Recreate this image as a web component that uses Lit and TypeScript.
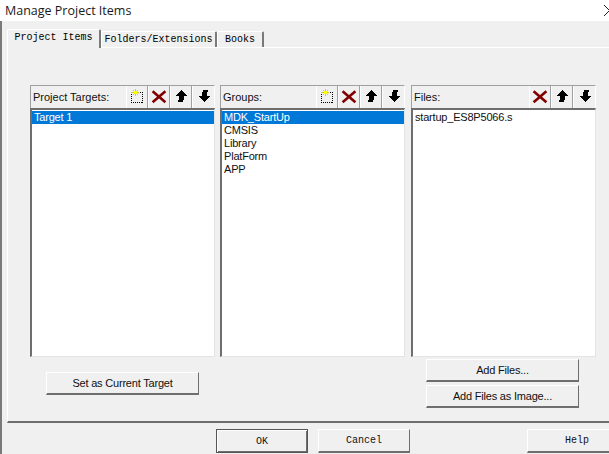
import { LitElement, html, css, svg } from "lit";
import { customElement } from "lit/decorators.js";

const newIcon = svg`<svg class="ic" width="18" height="18" viewBox="0 0 18 18" shape-rendering="crispEdges">
<rect x="3.5" y="4.5" width="11" height="10" fill="none" stroke="#000" stroke-dasharray="1 1"/>
<path d="M7 1h1v2h-1zM3 4h3v1h-3zM9 4h2v1h-2zM7 6h1v2h-1zM5 2h1v1h-1zM9 2h1v1h-1zM5 6h1v1h-1zM9 6h1v1h-1z" fill="#c8c838"/>
<path d="M6 3h3v3h-3z" fill="#ffff00"/></svg>`;
const delIcon = svg`<svg class="ic" width="18" height="18" viewBox="0 0 18 18">
<path d="M2.6 3.2L15.4 14.2M15.4 3.2L2.6 14.2" stroke="#800000" stroke-width="2.6" fill="none"/></svg>`;
const upIcon = svg`<svg class="ic" width="18" height="18" viewBox="0 0 18 18" shape-rendering="crispEdges">
<path d="M9 2h1v1h1v1h1v1h1v1h1v1h1v1h-3v4h-1v2h-5v-2h1v-4h-3v-1h1v-1h1v-1h1v-1h1v-1h1v-1h1z" fill="#000"/></svg>`;
const downIcon = svg`<svg class="ic" width="18" height="18" viewBox="0 0 18 18" shape-rendering="crispEdges">
<path d="M8 2h5v2h-1v4h3v1h-1v1h-1v1h-1v1h-1v1h-1v1h-1v-1h-1v-1h-1v-1h-1v-1h-1v-1h-1v-1h3v-4h1z" fill="#000"/></svg>`;

@customElement("app-root")
export class AppRoot extends LitElement {
  static styles = css`
    :host { display: block; width: 609px; height: 454px; overflow: hidden; }
    .win { width: 609px; height: 454px; display: flex; flex-direction: column; background: #f0f0f0; overflow: hidden; font-family: "Liberation Sans", Arial, sans-serif; color: #000; }
    .title { height: 21px; flex: none; background: #fff; display: flex; align-items: center; justify-content: space-between; padding: 0 0 0 5px; font: 12.5px "Open Sans", sans-serif; color: #1a1a1a; white-space: nowrap; }
    .close { width: 5px; height: 11px; overflow: hidden; display: block; }
    .body { flex: 1; min-height: 0; border-left: 2px solid #7a7a7a; display: flex; flex-direction: column; padding-left: 5px; }
    .tabs { display: flex; align-items: flex-end; height: 26px; flex: none; padding-left: 1px; font: 10px "Liberation Mono", monospace; }
    .tab { height: 15px; background: #f0f0f0; border-top: 1px solid #fff; border-left: 1px solid #fff; border-right: 2px solid #7a7a7a; border-top-left-radius: 2px; border-top-right-radius: 2px; display: flex; align-items: center; justify-content: center; }
    .tab.active { width: 91px; margin-bottom: -1px; margin-left: -1px; position: relative; z-index: 1; padding-bottom: 3px; }
    .tab.f { width: 113px; }
    .tab.b { width: 44px; }
    .panel { height: 376px; flex: none; box-sizing: border-box; border-top: 1px solid #fff; border-left: 1px solid #fff; border-bottom: 2px solid #6e6e6e; padding: 37px 0 0 22px; display: flex; flex-direction: column; margin-right: -10px; }
    .cols { display: flex; gap: 5px; }
    .col { width: 185px; flex: none; }
    .col.files { margin-left: 1px; }
    .head { height: 23px; box-sizing: border-box; border-top: 1px solid #a0a0a0; border-left: 1px solid #a0a0a0; border-right: 1px solid #fff; display: flex; align-items: center; padding-left: 2px; font-size: 11px; color: #111; }
    .label { flex: 1; white-space: nowrap; }
    .tool { width: 22px; height: 22px; flex: none; display: flex; align-items: center; justify-content: center; border-left: 1px solid #fff; border-right: 1px solid #a0a0a0; box-sizing: border-box; }
    .tool:last-child { border-right: none; }
    .ic { display: block; }
    .list { height: 249px; box-sizing: border-box; background: #fff; border-top: 2px solid #6e6e6e; border-left: 2px solid #6e6e6e; border-right: 1px solid #e3e3e3; border-bottom: 1px solid #e3e3e3; font-size: 11px; letter-spacing: -0.2px; line-height: 13px; padding-top: 1px; color: #111; }
    .row { height: 13px; padding-left: 2px; white-space: nowrap; }
    .row.sel { background: #0078d7; color: #fff; }
    .lower { display: flex; margin-top: 2px; height: 48px; }
    .btn { box-sizing: border-box; width: 153px; height: 23px; flex: none; background: #f0f0f0; border-top: 1px solid #fff; border-left: 1px solid #fff; border-right: 1px solid #6e6e6e; border-bottom: 2px solid #6e6e6e; display: flex; align-items: center; justify-content: center; font-size: 11px; letter-spacing: -0.2px; color: #111; white-space: nowrap; }
    .set { margin: 13px 0 0 16px; }
    .adds { margin-left: 227px; display: flex; flex-direction: column; gap: 3px; }
    .foot { display: flex; padding: 6px 0 0 209px; font: 10px "Liberation Mono", monospace; }
    .foot .btn { width: 92px; font: inherit; letter-spacing: 0; height: 24px; }
    .foot .ok { border: 1px solid #555; box-shadow: inset 1px 1px 0 #fff, inset -1px -1px 0 #6e6e6e; }
    .foot .cancel { margin-left: 10px; }
    .foot .help { margin-left: 117px; width: 100px; }
  `;

  private col(label: string, items: string[], withNew: boolean, cls = "") {
    return html`<div class="col ${cls}">
      <div class="head"><span class="label">${label}</span>
        ${withNew ? html`<span class="tool">${newIcon}</span>` : ""}
        <span class="tool">${delIcon}</span><span class="tool">${upIcon}</span><span class="tool">${downIcon}</span>
      </div>
      <div class="list">${items.map((t, i) => html`<div class="row ${i === 0 && cls !== "files" ? "sel" : ""}">${t}</div>`)}</div>
    </div>`;
  }

  render() {
    return html`<div class="win">
      <div class="title"><span>Manage Project Items</span>
        <svg class="close" viewBox="0 0 5 11"><path d="M0 0L5.5 5.5L0 11" stroke="#222" fill="none"/></svg></div>
      <div class="body">
        <div class="tabs"><div class="tab active">Project Items</div><div class="tab f">Folders/Extensions</div><div class="tab b">Books</div></div>
        <div class="panel">
          <div class="cols">
            ${this.col("Project Targets:", ["Target 1"], true)}
            ${this.col("Groups:", ["MDK_StartUp", "CMSIS", "Library", "PlatForm", "APP"], true)}
            ${this.col("Files:", ["startup_ES8P5066.s"], false, "files")}
          </div>
          <div class="lower">
            <div class="btn set">Set as Current Target</div>
            <div class="adds"><div class="btn">Add Files...</div><div class="btn">Add Files as Image...</div></div>
          </div>
        </div>
        <div class="foot"><div class="btn ok">OK</div><div class="btn cancel">Cancel</div><div class="btn help">Help</div></div>
      </div>
    </div>`;
  }
}
